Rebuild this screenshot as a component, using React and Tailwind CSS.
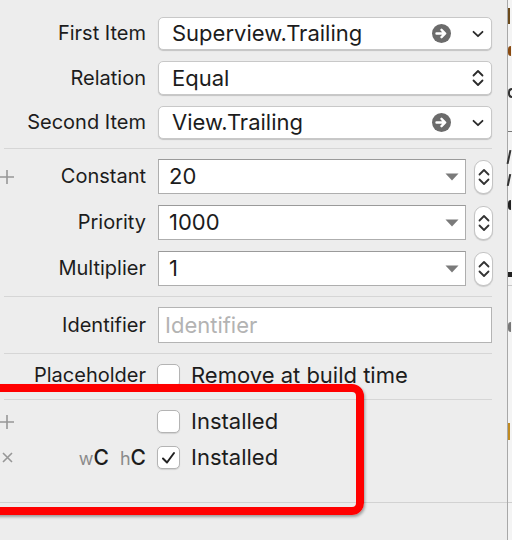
import { Fragment } from 'react'

const FONT = { fontFamily: 'Inter, "Noto Sans", "Liberation Sans", sans-serif' }

function ArrowCircle() {
  return (
    <svg width="19" height="19" viewBox="0 0 19 19">
      <circle cx="9.5" cy="9.5" r="9.5" fill="#6b6b6b" />
      <path d="M4.5 9.5h8M9.5 5.8l3.7 3.7-3.7 3.7" stroke="#fff" strokeWidth="2.4" fill="none" strokeLinecap="round" strokeLinejoin="round" />
    </svg>
  )
}

function ChevronDown() {
  return (
    <svg width="12" height="8" viewBox="0 0 12 8">
      <path d="M1.5 1.8 6 6.2l4.5-4.4" stroke="#2a2a2a" strokeWidth="1.8" fill="none" strokeLinecap="round" strokeLinejoin="round" />
    </svg>
  )
}

function UpDown({ color = '#2a2a2a' }) {
  return (
    <svg width="12" height="20" viewBox="0 0 12 20">
      <path d="M1.5 7.5 6 3l4.5 4.5M1.5 12.5 6 17l4.5-4.5" stroke={color} strokeWidth="1.8" fill="none" strokeLinecap="round" strokeLinejoin="round" />
    </svg>
  )
}

function PlusMark() {
  return (
    <svg width="14" height="14" viewBox="0 0 14 14">
      <path d="M7 0v14M0 7h14" stroke="#979797" strokeWidth="1.6" />
    </svg>
  )
}

function CrossMark() {
  return (
    <svg width="11" height="11" viewBox="0 0 11 11">
      <path d="M1 1l9 9M10 1l-9 9" stroke="#979797" strokeWidth="1.6" />
    </svg>
  )
}

function Label({ children }) {
  return <div className="w-[146px] shrink-0 text-right text-[20px] text-[#1c1c1c] leading-none pb-[1px]">{children}</div>
}

function PopupRow({ label, value, h, kind }) {
  return (
    <div className="flex items-center gap-[12px]">
      <Label>{label}</Label>
      <div
        className={`w-[334px] ${h} bg-white rounded-[5px] border border-[#c8c8c8] shadow-[0_1px_1px_rgba(0,0,0,0.18)] flex items-center pl-[13px] pr-[7px]`}
      >
        <span className="flex-1 text-[22px] text-[#1c1c1c] leading-none pb-[1px]">{value}</span>
        {kind === 'goto' ? (
          <Fragment>
            <ArrowCircle />
            <span className="ml-[21px] flex"><ChevronDown /></span>
          </Fragment>
        ) : (
          <span className="flex"><UpDown /></span>
        )}
      </div>
    </div>
  )
}

function Stepper() {
  return (
    <div className="w-[19px] h-[34px] bg-white rounded-[9px] border border-[#c4c4c4] shadow-[0_1px_1px_rgba(0,0,0,0.15)] flex items-center justify-center">
      <UpDown color="#333" />
    </div>
  )
}

function ComboRow({ label, value, plus }) {
  return (
    <div className="relative flex items-center gap-[12px]">
      {plus && <span className="absolute left-0 top-[11px] flex"><PlusMark /></span>}
      <Label>{label}</Label>
      <div className="w-[308px] h-[35px] bg-white border border-[#aeaeae] border-t-[#9a9a9a] flex items-center pl-[10px] pr-[8px]">
        <span className="flex-1 text-[22px] text-[#1c1c1c] leading-none pb-[1px]">{value}</span>
        <svg width="14" height="8" viewBox="0 0 14 8" className="mr-[-2px]">
          <path d="M0.5 0.5h13L7 7.5z" fill="#7a7a7a" />
        </svg>
      </div>
      <div className="ml-[-4px]">
        <Stepper />
      </div>
    </div>
  )
}

function Checkbox({ checked }) {
  return (
    <div className="w-[23px] h-[23px] bg-white rounded-[5px] border border-[#b4b4b4] shadow-[0_1px_1px_rgba(0,0,0,0.12)] flex items-center justify-center shrink-0">
      {checked && (
        <svg width="15" height="14" viewBox="0 0 15 14">
          <path d="M2 7.5 6 11.5 13 2" stroke="#222" strokeWidth="2" fill="none" strokeLinecap="round" strokeLinejoin="round" />
        </svg>
      )}
    </div>
  )
}

function Sep({ className }) {
  return <div className={`ml-[4px] w-[488px] h-px bg-[#d6d6d6] ${className}`} />
}

export default function App() {
  return (
    <div className="w-[512px] h-[540px] bg-[#ededed] flex overflow-hidden relative" style={FONT}>
      <div className="w-[507px] shrink-0 flex flex-col">
        <div className="pt-[17px] flex flex-col gap-[11px]">
          <PopupRow label="First Item" value="Superview.Trailing" h="h-[33px]" kind="goto" />
          <PopupRow label="Relation" value="Equal" h="h-[34px]" kind="updown" />
          <PopupRow label="Second Item" value="View.Trailing" h="h-[33px]" kind="goto" />
        </div>
        <Sep className="mt-[9px]" />

        <div className="mt-[10px] flex flex-col gap-[11px]">
          <ComboRow label="Constant" value="20" plus />
          <ComboRow label="Priority" value="1000" />
          <ComboRow label="Multiplier" value="1" />
        </div>
        <Sep className="mt-[10px]" />

        <div className="mt-[10px] flex items-center gap-[12px]">
          <Label>Identifier</Label>
          <div className="w-[334px] h-[36px] bg-white border border-[#b4b4b4] flex items-center pl-[6px]">
            <span className="text-[22px] text-[#b3b3b3] leading-none pb-[1px]">Identifier</span>
          </div>
        </div>
        <Sep className="mt-[10px]" />

        <div className="mt-[10px] flex items-center">
          <Label>Placeholder</Label>
          <div className="ml-[11px]"><Checkbox /></div>
          <span className="ml-[11px] text-[22px] text-[#1c1c1c] leading-none pb-[1px]">Remove at build time</span>
        </div>
        <Sep className="mt-[12px]" />

        <div className="mt-[10px] flex flex-col gap-[13px]">
          <div className="relative flex items-center">
            <span className="absolute left-0 top-[5px] flex"><PlusMark /></span>
            <div className="w-[146px] shrink-0" />
            <div className="ml-[11px]"><Checkbox /></div>
            <span className="ml-[11px] text-[22px] text-[#1c1c1c] leading-none pb-[1px]">Installed</span>
          </div>
          <div className="relative flex items-center">
            <span className="absolute left-[2px] top-[6px] flex"><CrossMark /></span>
            <div className="w-[146px] shrink-0 flex justify-end items-baseline leading-none pb-[1px]">
              <span className="text-[18px] text-[#8a8a8a]">w</span>
              <span className="text-[21px] text-[#1c1c1c] font-medium">C</span>
              <span className="ml-[11px] text-[18px] text-[#8a8a8a]">h</span>
              <span className="text-[21px] text-[#1c1c1c] font-medium">C</span>
            </div>
            <div className="ml-[11px]"><Checkbox checked /></div>
            <span className="ml-[11px] text-[22px] text-[#1c1c1c] leading-none pb-[1px]">Installed</span>
          </div>
        </div>
        <div className="mt-[33px] w-[507px] h-px bg-[#d2d2d2]" />
      </div>

      <div className="relative flex-1 bg-[#f4f4f4] border-l border-[#a8a8a8]">
        <div className="absolute left-0 top-[8px] w-[2px] h-[16px] bg-[#6b4a1c]" />
        <div className="absolute left-0 top-[46px] w-[3px] h-[10px] bg-[#8a4a10] rounded-l-full" />
        <div className="absolute left-0 top-[88px] w-[4px] h-[10px] border-2 border-r-0 border-[#333] rounded-l-full" />
        <div className="absolute left-0 top-[131px] w-[5px] h-px bg-[#777]" />
        <div className="absolute left-0 top-[150px] w-[2px] h-[14px] bg-[#333] rotate-12" />
        <div className="absolute left-0 top-[174px] w-[2px] h-[12px] bg-[#333] rotate-12" />
        <div className="absolute left-0 top-[200px] w-[3px] h-[10px] bg-[#222] rounded-l-full" />
        <div className="absolute left-0 top-[272px] w-[5px] h-[5px] bg-[#222]" />
        <div className="absolute left-0 top-[285px] w-[5px] h-px bg-[#c8c8c8]" />
        <div className="absolute left-0 top-[322px] w-[3px] h-[10px] bg-[#777] rounded-l-full" />
        <div className="absolute left-0 top-[423px] w-[2px] h-[17px] bg-[#c08a20]" />
        <div className="absolute left-0 top-[502px] w-[5px] h-px bg-[#cfcfcf]" />
      </div>

      <div className="absolute left-[-20px] top-[384px] w-[384px] h-[131px] border-[8px] border-[#ff0000] rounded-[12px] shadow-[1px_2px_3px_rgba(0,0,0,0.35)] pointer-events-none" />
    </div>
  )
}
